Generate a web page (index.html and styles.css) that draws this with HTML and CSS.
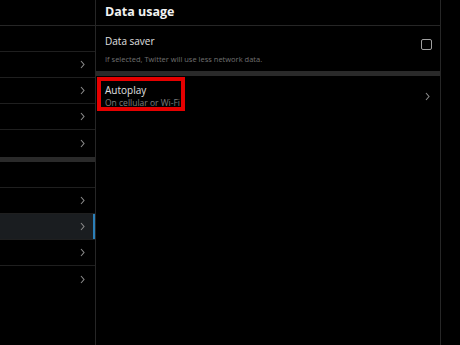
FILE: index.html
```html
<!DOCTYPE html>
<html lang="en">
<head>
<meta charset="UTF-8">
<meta name="viewport" content="width=device-width, initial-scale=1.0">
<title>Data usage</title>
<link rel="stylesheet" href="styles.css">
</head>
<body>
<div class="app">
  <div class="nav">
    <div class="nav-top"></div>
    <div class="nav-row"></div>
    <div class="nav-row"><svg class="chev" viewBox="0 0 5 9"><polyline points="1,1 4,4.5 1,8"/></svg></div>
    <div class="nav-row"><svg class="chev" viewBox="0 0 5 9"><polyline points="1,1 4,4.5 1,8"/></svg></div>
    <div class="nav-row"><svg class="chev" viewBox="0 0 5 9"><polyline points="1,1 4,4.5 1,8"/></svg></div>
    <div class="nav-row last"><svg class="chev" viewBox="0 0 5 9"><polyline points="1,1 4,4.5 1,8"/></svg></div>
    <div class="band"></div>
    <div class="nav-row"></div>
    <div class="nav-row"><svg class="chev" viewBox="0 0 5 9"><polyline points="1,1 4,4.5 1,8"/></svg></div>
    <div class="nav-row active"><svg class="chev" viewBox="0 0 5 9"><polyline points="1,1 4,4.5 1,8"/></svg></div>
    <div class="nav-row"><svg class="chev" viewBox="0 0 5 9"><polyline points="1,1 4,4.5 1,8"/></svg></div>
    <div class="nav-row last"><svg class="chev" viewBox="0 0 5 9"><polyline points="1,1 4,4.5 1,8"/></svg></div>
  </div>

  <div class="main">
    <div class="main-header">Data usage</div>
    <div class="setting">
      <div class="setting-text">
        <div class="setting-title">Data saver</div>
        <div class="setting-note">If selected, Twitter will use less network data.</div>
      </div>
      <span class="checkbox"></span>
    </div>
    <div class="band"></div>
    <div class="setting link">
      <div class="setting-text">
        <div class="setting-title">Autoplay</div>
        <div class="setting-sub">On cellular or Wi-Fi</div>
      </div>
      <svg class="chev" viewBox="0 0 5 9"><polyline points="1,1 4,4.5 1,8"/></svg>
      <div class="highlight"></div>
    </div>
  </div>
  <div class="side"></div>
</div>
</body>
</html>
```

FILE: styles.css
```css
body {
  margin: 0;
  background-color: #000;
  font-family: "Open Sans", "Noto Sans", sans-serif;
  color: #e6e6e6;
}
.app {
  display: flex;
  width: 460px;
  height: 345px;
  overflow: hidden;
}
.nav {
  width: 95px;
  flex-shrink: 0;
  border-right: 1px solid #262626;
}
.nav-top {
  height: 25px;
  border-bottom: 1px solid #262626;
}
.nav-row {
  height: 25px;
  border-bottom: 1px solid #1f1f1f;
  display: flex;
  align-items: center;
  justify-content: flex-end;
  padding-right: 10px;
}
.nav-row.last {
  border-bottom: none;
  height: 26px;
}
.nav-row.active {
  background-color: #1a1d20;
  box-shadow: inset -2px 0 0 #2b7fb8;
}
.chev {
  width: 5px;
  height: 9px;
  fill: none;
  stroke: #8a8a8a;
  stroke-width: 1.1;
}
.band {
  height: 5px;
  background-color: #2a2a2a;
  margin-top: 1px;
}
.main {
  width: 344px;
  flex-shrink: 0;
  border-right: 1px solid #262626;
}
.main-header {
  height: 25px;
  line-height: 24px;
  padding-left: 9px;
  font-size: 12.5px;
  font-weight: bold;
  color: #f2f2f2;
  border-bottom: 1px solid #262626;
}
.setting {
  display: flex;
  align-items: center;
  justify-content: space-between;
  padding: 8px 8px 5px 9px;
  position: relative;
}
.setting-title {
  font-size: 10px;
  line-height: 14px;
  color: #e0e0e0;
}
.setting-note {
  font-size: 7.5px;
  line-height: 12px;
  margin-top: 5px;
  color: #707070;
}
.setting-sub {
  font-size: 8.5px;
  line-height: 12px;
  color: #7c7c7c;
}
.checkbox {
  width: 9px;
  height: 9px;
  border: 1.5px solid #a0a0a0;
  border-radius: 2px;
  margin-top: -10px;
}
.setting.link {
  padding: 7px 10px 9px 9px;
}
.highlight {
  position: absolute;
  left: 1px;
  top: 1px;
  width: 80px;
  height: 26px;
  border: 4px solid #e50000;
}
.side {
  flex: 1;
}
```
